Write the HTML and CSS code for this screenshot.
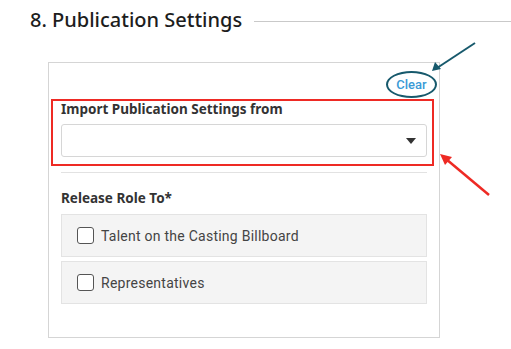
FILE: index.html
```html
<!DOCTYPE html>
<html lang="en">
<head>
  <meta charset="UTF-8" />
  <title>Publication Settings</title>
  <link rel="stylesheet" href="styles.css">
</head>
<body>
  <div class="section-head">
    <h2>8. Publication Settings</h2>
    <span class="head-line"></span>
  </div>

  <div class="panel">
    <div class="clear-row">
      <span class="clear-link">Clear</span>
    </div>

    <div class="highlight">
      <label class="field-label">Import Publication Settings from</label>
      <div class="select-box">
        <span class="caret"></span>
      </div>
    </div>

    <div class="divider"></div>

    <div class="field-label release">Release Role To*</div>
    <div class="option-list">
      <label class="option">
        <span class="check"></span>
        <span>Talent on the Casting Billboard</span>
      </label>
      <label class="option">
        <span class="check"></span>
        <span>Representatives</span>
      </label>
    </div>
  </div>

  <svg class="notes" width="511" height="349" viewBox="0 0 511 349">
    <line x1="475" y1="43" x2="437" y2="68" stroke="#17596c" stroke-width="2"/>
    <polygon points="432,71 435,62 441,69" fill="#17596c"/>
    <line x1="489" y1="195" x2="446" y2="159" stroke="#ee2a24" stroke-width="2.5"/>
    <polygon points="440,154 452,157 445,165" fill="#ee2a24"/>
  </svg>
</body>
</html>
```

FILE: styles.css
```css
body {
  margin: 0;
  font-family: Roboto, "Noto Sans", sans-serif;
  background-color: #ffffff;
  color: #333;
}
.section-head {
  display: flex;
  align-items: center;
  gap: 12px;
  padding: 7px 0 0 30px;
  height: 26px;
}
.section-head h2 {
  margin: 0;
  font-family: "Noto Sans", sans-serif;
  font-size: 20px;
  font-weight: 500;
  line-height: 26px;
  color: #1d1d1d;
  white-space: nowrap;
}
.head-line {
  flex: 1;
  height: 1px;
  background-color: #c9c9c9;
  margin-top: 3px;
}
.panel {
  box-sizing: border-box;
  width: 392px;
  margin: 29px 0 0 48px;
  border: 1px solid #d5d5d5;
  padding: 8px 12px 33px;
}
.clear-row {
  display: flex;
  justify-content: flex-end;
  margin-right: -10px;
}
.clear-link {
  box-sizing: border-box;
  width: 51px;
  height: 27px;
  border: 2px solid #17596c;
  border-radius: 50%;
  display: flex;
  align-items: center;
  justify-content: center;
  font-size: 13px;
  font-weight: 500;
  color: #3a9ad6;
}
.highlight {
  margin: 1px -7px 0 -10px;
  border: 2px solid #ee2a24;
  padding: 0 5px 7px 8px;
}
.field-label {
  display: block;
  font-family: "Noto Sans", sans-serif;
  font-size: 13.5px;
  font-weight: 700;
  line-height: 16px;
  color: #333;
}
.highlight .field-label {
  margin-bottom: 7px;
}
.select-box {
  box-sizing: border-box;
  height: 33px;
  border: 1px solid #d6d6d6;
  border-radius: 3px;
  display: flex;
  align-items: center;
  justify-content: flex-end;
  padding-right: 10px;
}
.caret {
  width: 0;
  height: 0;
  border-left: 5px solid transparent;
  border-right: 5px solid transparent;
  border-top: 6px solid #333;
}
.divider {
  height: 1px;
  background-color: #e2e2e2;
  margin-top: 6px;
}
.release {
  margin: 17px 0 8px;
}
.option-list {
  display: flex;
  flex-direction: column;
  gap: 4px;
}
.option {
  box-sizing: border-box;
  height: 43px;
  display: flex;
  align-items: center;
  gap: 7px;
  padding-left: 15px;
  background-color: #f4f4f4;
  border: 1px solid #e3e3e3;
  font-size: 14px;
  letter-spacing: 0.25px;
  color: #444;
}
.check {
  box-sizing: border-box;
  width: 17px;
  height: 17px;
  border: 1px solid #555;
  border-radius: 3px;
  background-color: #fff;
}
.notes {
  position: absolute;
  left: 0;
  top: 0;
  pointer-events: none;
}
```
